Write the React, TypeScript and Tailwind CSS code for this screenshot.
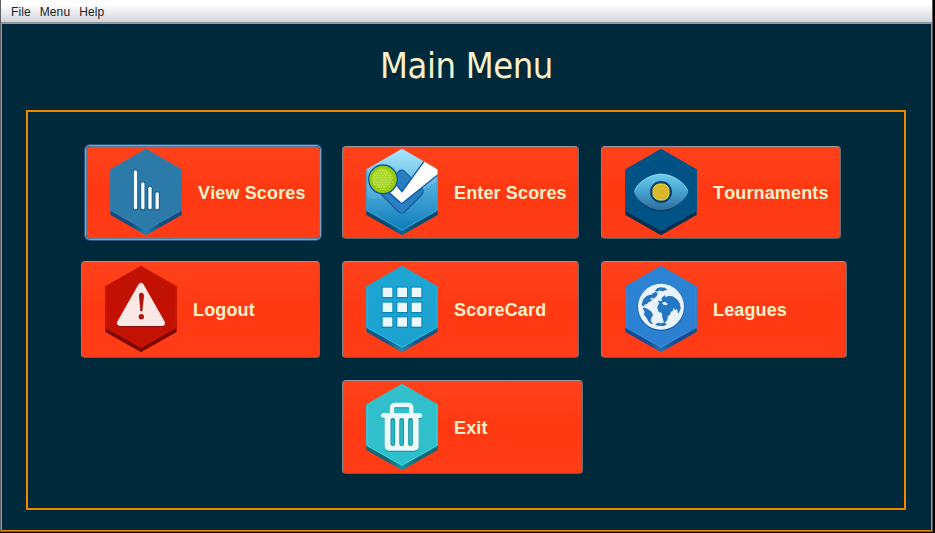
import React from "react";

type HexProps = {
  id: string;
  top: string;
  bottom: string;
  side: string;
  sideRight?: string;
  edge: string;
  children: React.ReactNode;
};

const FACE = "M108 2 L215 64 V188 L108 248 L1 188 V64 Z";

function Hex({ id, top, bottom, side, sideRight, edge, children }: HexProps) {
  return (
    <svg className="h-[88px] w-[72px] shrink-0" viewBox="0 0 216 264">
      <defs>
        <linearGradient id={id} x1="0" y1="0" x2="0" y2="1">
          <stop offset="0" stopColor={top} />
          <stop offset="1" stopColor={bottom} />
        </linearGradient>
        <linearGradient id={id + "-side"} x1="0" y1="0" x2="1" y2="0">
          <stop offset="0" stopColor={side} />
          <stop offset="0.3" stopColor={side} />
          <stop offset="0.5" stopColor={sideRight ?? side} />
          <stop offset="0.7" stopColor={side} />
          <stop offset="1" stopColor={side} />
        </linearGradient>
        <clipPath id={id + "-clip"}>
          <path d={FACE} />
        </clipPath>
      </defs>
      <path d="M1 64 H215 V201 L108 262 L1 201 Z" fill={`url(#${id}-side)`} />
      <path d={FACE} fill={`url(#${id})`} />
      <path d="M3 66 V187 L108 246.500 L213 187 V66" fill="none" stroke={edge} strokeWidth="3" />
      {children}
    </svg>
  );
}

function BarsIcon() {
  const bars = [
    [76.5, 72],
    [98.5, 108],
    [120, 121],
    [141.5, 138],
  ];
  return (
    <Hex id="bars" top="#2b7aa9" bottom="#2b7aa9" side="#174a80" sideRight="#1b83b4" edge="#3381af">
      {bars.map(([x, y]) => (
        <g key={x} strokeLinecap="round">
          <path d={`M${x} ${y} V180`} stroke="#175f8b" strokeWidth="16" />
          <path d={`M${x} ${y} V179`} stroke="#f8fbfd" strokeWidth="10" />
        </g>
      ))}
    </Hex>
  );
}

function CheckIcon() {
  const dots: [number, number][] = [];
  for (let r = -4; r <= 4; r++)
    for (let c = -4; c <= 4; c++) {
      const x = c * 8 + (r % 2 ? 4 : 0);
      const y = r * 7;
      if (x * x + y * y < 900) dots.push([51 + x, 96 + y]);
    }
  return (
    <Hex id="check" top="#a9e8ff" bottom="#0e7cba" side="#07486e" sideRight="#0a6594" edge="#3caad8">
      <g clipPath="url(#check-clip)">
        <path d="M3 150 Q110 165 213 100 V250 H3 Z" fill="#087ebd" opacity="0.18" />
        <rect x="58" y="82" width="98" height="98" rx="12" transform="rotate(45 107 131)" fill="#2a7fc2" stroke="#175f9c" strokeWidth="4" />
        <path d="M71 132 L107 167 L216 80 V66 L173 40 L108 131 L93 113 Z" fill="#fff" />
        <path d="M216 80 L107 167" fill="none" stroke="#0b55a9" strokeWidth="4" />
        <path d="M174 40 L108 131 L93 113 M69 134 L107 167" fill="none" stroke="#0b55a9" strokeWidth="4" />
      </g>
      <circle cx="51" cy="94" r="43" fill="#96cb0b" stroke="#0b55a9" strokeWidth="4" />
      <circle cx="48" cy="91" r="30" fill="#abd62c" />
      {dots.map(([x, y], i) => (
        <circle key={i} cx={x} cy={y} r="1.8" fill="#d3ea7a" />
      ))}
    </Hex>
  );
}

function EyeIcon() {
  return (
    <Hex id="eye" top="#005284" bottom="#005386" side="#07304f" edge="#045a8d">
      <defs>
        <linearGradient id="eye-lid" x1="0" y1="0" x2="0" y2="1">
          <stop offset="0" stopColor="#70cbed" />
          <stop offset="0.5" stopColor="#45a2d0" />
          <stop offset="1" stopColor="#316d9d" />
        </linearGradient>
      </defs>
      <path d="M26 134 C50 99 75 78 108 78 C142 78 168 99 190 134 C168 169 142 190 108 190 C75 190 48 169 26 134 Z" fill="#063d65" />
      <path d="M27 131 C34 104 75 77 108 77 C142 77 182 104 190 131 C182 158 142 186 108 186 C75 186 34 158 27 131 Z" fill="url(#eye-lid)" />
      <path d="M30 127 C40 102 76 79 108 79 C141 79 177 102 187 127" fill="none" stroke="#8bdcf5" strokeWidth="2.5" />
      <circle cx="108" cy="132" r="33" fill="#07436d" />
      <circle cx="108" cy="132" r="28" fill="#0b5378" />
      <rect x="84" y="108" width="48" height="48" rx="20" fill="#d9b82d" stroke="#f4d331" strokeWidth="3" />
    </Hex>
  );
}

function WarningIcon() {
  return (
    <Hex id="warn" top="#c11102" bottom="#c31102" side="#7d0802" edge="#d01607">
      <path d="M108 65 L45 177 H171 Z" fill="#8e1008" stroke="#8e1008" strokeWidth="18" strokeLinejoin="round" />
      <path d="M108 63 L45 174 H171 Z" fill="#fae8e6" stroke="#fae8e6" strokeWidth="18" strokeLinejoin="round" />
      <path d="M103 90 Q103 84 109 84 Q116 84 116 92 L111 138 H107 Z" fill="#b31208" stroke="#a31209" strokeWidth="2" />
      <circle cx="109" cy="155" r="8" fill="#b31208" />
    </Hex>
  );
}

function GridIcon() {
  return (
    <Hex id="grid" top="#1fa5d1" bottom="#1ca2d0" side="#175681" sideRight="#2a86ac" edge="#25bce9">
      {[68, 113, 157].map((y) =>
        [50, 94, 137].map((x) => (
          <g key={`${x}-${y}`}>
            <rect x={x - 3} y={y - 3} width="35" height="35" fill="#0787b6" />
            <rect x={x} y={y} width="29" height="28" fill="#eaf7fb" />
          </g>
        )),
      )}
    </Hex>
  );
}

function GlobeIcon() {
  return (
    <Hex id="globe" top="#2c82d3" bottom="#2b80d2" side="#174a91" sideRight="#2372ad" edge="#378bd8">
      <circle cx="108" cy="127" r="71" fill="#1762ae" />
      <circle cx="108" cy="125" r="69" fill="#e9f3fc" />
      <g fill="#2377c5" stroke="#1761aa" strokeWidth="2" strokeLinejoin="round">
        <path d="M91 77 Q94 69 106 68 Q122 68 126 74 L119 75 L114 78 L104 75 L98 79 Z" />
        <path d="M51 119 Q54 101 65 94 L77 90 L81 92 L75 100 L80 106 L71 110 L65 117 L58 117 L56 124 Z" />
        <path d="M78 97 L82 87 L91 82 L97 85 L94 93 L87 100 Z" />
        <path d="M54 130 L62 130 L69 134 L78 140 L83 149 L78 159 L76 167 L82 177 L73 172 L66 159 L58 149 L60 140 Z" />
        <path d="M111 99 L119 92 L121 98 L130 94 L143 95 L156 104 L163 115 L166 130 L160 144 L157 130 L152 134 L145 128 L142 138 L136 139 L135 148 L127 154 L126 166 L118 172 L113 157 L112 144 L101 139 L98 127 L103 115 L101 108 L112 110 Z" />
        <path d="M92 178 L101 174 L106 176 L119 173 L124 178 L116 182 L97 181 Z" />
      </g>
      <path d="M111 114 L120 110 L128 116 L125 121 L116 119 Z" fill="#e9f3fc" />
    </Hex>
  );
}

function TrashShape({ color }: { color: string }) {
  return (
    <g stroke={color} fill="none">
      <path d="M78 98 V76 Q78 66 88 66 H126 Q136 66 136 76 V98" strokeWidth="13" />
      <path d="M52 98 H162" strokeWidth="14" strokeLinecap="round" />
      <path d="M56 98 H158 V190 Q158 203 145 203 H69 Q56 203 56 190 Z" fill={color} stroke="none" />
    </g>
  );
}

function TrashIcon() {
  return (
    <Hex id="trash" top="#32c0cb" bottom="#2fbfcc" side="#126773" sideRight="#1b929a" edge="#38dce5">
      <g transform="translate(0 3)">
        <TrashShape color="#168d99" />
      </g>
      <TrashShape color="#ecf9fb" />
      <g stroke="#168d99" strokeWidth="14" strokeLinecap="round">
        <path d="M80.500 112 V182 M107 112 V182 M133.500 112 V182" />
      </g>
      <g stroke="#29b8c5" strokeWidth="9" strokeLinecap="round">
        <path d="M80.500 114 V182 M107 114 V182 M133.500 114 V182" />
      </g>
    </Hex>
  );
}

type MenuButtonProps = { label: string; className: string; focused?: boolean; children: React.ReactNode };

function MenuButton({ label, className, focused, children }: MenuButtonProps) {
  return (
    <button
      className={
        "flex shrink-0 items-start gap-4 rounded-[4px] border bg-linear-to-b from-[#ff421b] via-[#ff3912] to-[#ff3d17] pl-[23px] text-left " +
        (focused
          ? "border-[#5d7f9f] shadow-[0_0_0_1px_#76a3c8,0_0_0_2px_#2a567b] "
          : "border-t-[#98969a] border-r-[#6e6c70] border-b-[#54616a] border-l-[#858388] ") +
        className
      }
    >
      {children}
      <span className="mt-[32px] text-[18px] leading-[26px] font-bold tracking-[0.14px] whitespace-nowrap text-[#f9f1ca] [font-kerning:none]">
        {label}
      </span>
    </button>
  );
}

export default function App() {
  return (
    <div className="h-[533px] w-[935px] overflow-hidden bg-black font-['Liberation_Sans',Arial,sans-serif]">
      <div className="flex h-[532px] w-[933px] flex-col border-r border-b border-l border-[#5f5d62]">
        <nav className="flex h-[23px] shrink-0 items-start gap-[9px] border-b border-[#929198] bg-linear-to-b from-white from-20% to-[#d2d4dc] pt-[4px] pl-[10px] text-[12px] leading-4 tracking-[0.1px] text-[#222]">
          <span>File</span>
          <span>Menu</span>
          <span>Help</span>
        </nav>
        <main className="flex flex-1 flex-col border border-[#ef8908] bg-[#00293b] px-[24px]">
          <h1 className="h-[86px] shrink-0 pt-[19px] text-center font-['DejaVu_Sans_Condensed','DejaVu_Sans',sans-serif] text-[36px] leading-[46px] tracking-[-0.4px] text-[#f9f1ca]">
            Main Menu
          </h1>
          <section className="flex h-[400px] w-[880px] shrink-0 flex-col border-2 border-[#f08700] pt-[34px]">
            <div className="flex pl-[58px]">
              <MenuButton label="View Scores" className="h-[93px] w-[234px] pt-[1px]" focused>
                <BarsIcon />
              </MenuButton>
              <MenuButton label="Enter Scores" className="ml-[22px] h-[93px] w-[237px] pt-[1px]">
                <CheckIcon />
              </MenuButton>
              <MenuButton label="Tournaments" className="ml-[22px] h-[93px] w-[240px] pt-[1px]">
                <EyeIcon />
              </MenuButton>
            </div>
            <div className="mt-[22px] flex pl-[53px]">
              <MenuButton label="Logout" className="h-[97px] w-[239px] pt-[3px]">
                <WarningIcon />
              </MenuButton>
              <MenuButton label="ScoreCard" className="ml-[22px] h-[97px] w-[237px] pt-[3px]">
                <GridIcon />
              </MenuButton>
              <MenuButton label="Leagues" className="ml-[22px] h-[97px] w-[246px] pt-[3px]">
                <GlobeIcon />
              </MenuButton>
            </div>
            <div className="mt-[22px] flex pl-[314px]">
              <MenuButton label="Exit" className="h-[94px] w-[241px] pt-[2px]">
                <TrashIcon />
              </MenuButton>
            </div>
          </section>
        </main>
      </div>
    </div>
  );
}
